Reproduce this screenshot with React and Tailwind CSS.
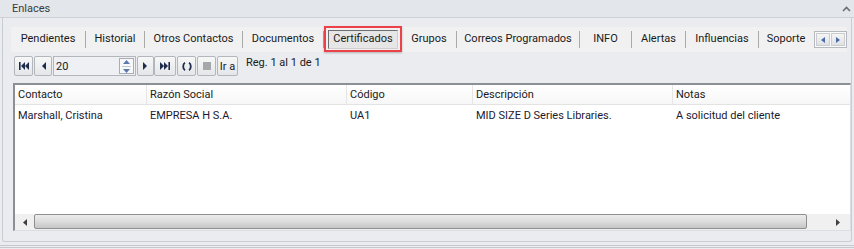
import React from "react";

const F = { fontFamily: 'Roboto, "Liberation Sans", Arial, sans-serif' };

function Sep() {
  return <div className="w-px h-[17px] bg-[#a9a9a9] shrink-0" />;
}

function Tab({ w, children }) {
  return (
    <div className={`h-full flex items-center justify-center shrink-0 text-[11px] text-[#1a1a1a] ${w}`}>
      {children}
    </div>
  );
}

function NavBtn({ w, children, ml = "" }) {
  return (
    <div
      className={`h-[20px] ${w} ${ml} shrink-0 rounded-[2px] border border-[#b3b6bb] bg-gradient-to-b from-[#f7f7f7] to-[#e4e6e9] flex items-center justify-center`}
    >
      {children}
    </div>
  );
}

const ic = "#1f2b4d";

export default function App() {
  return (
    <div style={F} className="w-[854px] h-[249px] bg-[#eaecef] overflow-hidden flex flex-col">
      {/* title bar */}
      <div className="h-[18px] shrink-0 bg-[#e3e6ea] border-b border-[#cdd1d6] flex items-center justify-between pl-[12px] pr-[3px]">
        <span className="text-[11px] text-[#3a3a3a] leading-none">Enlaces</span>
        <svg width="9" height="6" viewBox="0 0 9 6">
          <path d="M1 5 L4.5 1.5 L8 5" fill="none" stroke="#6b6f75" strokeWidth="1.6" />
        </svg>
      </div>

      {/* body */}
      <div className="h-[224px] shrink-0 flex flex-col ml-[2px] mr-[2px] border-l border-r border-b border-[#c9cdd2] rounded-b-[3px]">
        {/* tabs */}
        <div className="mt-[9px] ml-[8px] w-[836px] h-[25px] bg-[#f1f1f1] flex items-center">
          <Tab w="w-[74px]">Pendientes</Tab>
          <Sep />
          <Tab w="w-[58px]">Historial</Tab>
          <Sep />
          <Tab w="w-[97px]">Otros Contactos</Tab>
          <Sep />
          <Tab w="w-[80px]">Documentos</Tab>
          <Sep />
          <div className="w-[78px] h-[26px] -mt-px shrink-0 border-2 border-[#ec4148] flex items-center justify-center shadow-[0_1px_2px_rgba(0,0,0,0.25)]">
            <div className="w-[70px] h-[19px] border border-[#6f6f6f] border-b-[#cfcfcf] border-r-[#cfcfcf] bg-[#e6e6e6] flex items-center justify-center text-[11px] text-[#1a1a1a]">
              Certificados
            </div>
          </div>
          <Tab w="w-[54px]">Grupos</Tab>
          <Sep />
          <Tab w="w-[122px]">Correos Programados</Tab>
          <Sep />
          <Tab w="w-[51px]">INFO</Tab>
          <Sep />
          <Tab w="w-[53px]">Alertas</Tab>
          <Sep />
          <Tab w="w-[72px]">Influencias</Tab>
          <Sep />
          <Tab w="w-[54px]">Soporte</Tab>
          <div className="ml-[1px] w-[33px] h-[17px] border border-[#b5b8bd] bg-[#fafafa] flex p-px gap-px">
            <div className="flex-1 bg-gradient-to-b from-[#f5f5f5] to-[#dfe1e4] border border-[#c9ccd0] flex items-center justify-center">
              <svg width="4" height="6" viewBox="0 0 4 6"><path d="M4 0 L0 3 L4 6 Z" fill="#4a6aa8" /></svg>
            </div>
            <div className="flex-1 bg-gradient-to-b from-[#f5f5f5] to-[#dfe1e4] border border-[#c9ccd0] flex items-center justify-center">
              <svg width="4" height="6" viewBox="0 0 4 6"><path d="M0 0 L4 3 L0 6 Z" fill="#4a6aa8" /></svg>
            </div>
          </div>
        </div>

        {/* navigator */}
        <div className="mt-[4px] ml-[11px] flex items-start h-[20px]">
          <NavBtn w="w-[19px]">
            <svg width="10" height="8" viewBox="0 0 10 8">
              <rect x="0" y="0" width="1.6" height="8" fill={ic} />
              <path d="M6 0 L2 4 L6 8 Z" fill={ic} />
              <path d="M10 0 L6 4 L10 8 Z" fill={ic} />
            </svg>
          </NavBtn>
          <NavBtn w="w-[18px]" ml="ml-[1px]">
            <svg width="5" height="8" viewBox="0 0 5 8"><path d="M5 0 L1 4 L5 8 Z" fill={ic} /></svg>
          </NavBtn>
          <div className="ml-[1px] h-[20px] w-[83px] shrink-0 border border-[#b3b6bb] bg-[#eef0f3] flex items-center justify-between pl-[2px] pr-[1px]">
            <span className="text-[11px] text-[#1a1a1a] leading-none">20</span>
            <div className="w-[15px] h-[16px] border border-[#a9adb3] bg-[#f7f8fa] flex flex-col items-center justify-center gap-[2px]">
              <svg width="7" height="4" viewBox="0 0 7 4"><path d="M0 4 L3.5 0 L7 4 Z" fill="#5b79ad" /></svg>
              <div className="w-[9px] h-px bg-[#c3c6cb]" />
              <svg width="7" height="4" viewBox="0 0 7 4"><path d="M0 0 L3.5 4 L7 0 Z" fill="#5b79ad" /></svg>
            </div>
          </div>
          <NavBtn w="w-[17px]" ml="ml-[1px]">
            <svg width="5" height="8" viewBox="0 0 5 8"><path d="M0 0 L4 4 L0 8 Z" fill={ic} /></svg>
          </NavBtn>
          <NavBtn w="w-[22px]">
            <svg width="10" height="8" viewBox="0 0 10 8">
              <path d="M0 0 L4 4 L0 8 Z" fill={ic} />
              <path d="M4 0 L8 4 L4 8 Z" fill={ic} />
              <rect x="8.4" y="0" width="1.6" height="8" fill={ic} />
            </svg>
          </NavBtn>
          <NavBtn w="w-[19px]" ml="ml-[1px]">
            <svg width="10" height="9" viewBox="0 0 10 9">
              <path d="M3 0.8 C0.6 2 0.6 7 3 8.2" fill="none" stroke={ic} strokeWidth="1.8" />
              <path d="M7 0.8 C9.4 2 9.4 7 7 8.2" fill="none" stroke={ic} strokeWidth="1.8" />
            </svg>
          </NavBtn>
          <NavBtn w="w-[19px]" ml="ml-[1px]">
            <div className="w-[8px] h-[8px] bg-[#a5a7ab]" />
          </NavBtn>
          <NavBtn w="w-[21px]" ml="ml-[1px]">
            <span className="text-[11px] text-[#1a1a1a] leading-none">Ir a</span>
          </NavBtn>
          <span className="ml-[8px] text-[11px] text-[#1a1a1a] leading-[14px]">Reg. 1 al 1 de 1</span>
        </div>

        {/* grid */}
        <div className="mt-[7px] ml-[10px] w-[838px] h-[148px] border-t-2 border-l-2 border-t-[#8c8f94] border-l-[#8c8f94] border-r border-b border-r-[#dadde1] border-b-[#dadde1] bg-white flex flex-col">
          <div className="h-[20px] shrink-0 flex border-b border-[#e3e3e3] bg-gradient-to-b from-white to-[#f7f7f7] text-[11px] text-[#1a1a1a]">
            <div className="w-[132px] pl-[3px] pt-[2px] flex items-center border-r border-[#e5e5e5]">Contacto</div>
            <div className="w-[200px] pl-[3px] pt-[2px] flex items-center border-r border-[#e5e5e5]">Razón Social</div>
            <div className="w-[126px] pl-[3px] pt-[2px] flex items-center border-r border-[#e5e5e5]">Código</div>
            <div className="w-[200px] pl-[3px] pt-[2px] flex items-center border-r border-[#e5e5e5]">Descripción</div>
            <div className="flex-1 pl-[3px] pt-[2px] flex items-center">Notas</div>
          </div>
          <div className="h-[22px] shrink-0 flex text-[11px] text-[#1c1a2e]">
            <div className="w-[132px] pl-[3px] flex items-center">Marshall, Cristina</div>
            <div className="w-[200px] pl-[3px] flex items-center">EMPRESA H S.A.</div>
            <div className="w-[126px] pl-[3px] flex items-center">UA1</div>
            <div className="w-[200px] pl-[3px] flex items-center">MID SIZE D Series Libraries.</div>
            <div className="flex-1 pl-[3px] flex items-center">A solicitud del cliente</div>
          </div>
          <div className="flex-1" />
          {/* h scrollbar */}
          <div className="h-[16px] shrink-0 flex bg-[#f0f0f0]">
            <div className="w-[19px] flex items-center justify-center">
              <svg width="4" height="7" viewBox="0 0 4 7"><path d="M4 0 L0 3.5 L4 7 Z" fill="#404040" /></svg>
            </div>
            <div className="w-[773px] h-[15px] rounded-[2px] border border-[#8e8f91] bg-gradient-to-b from-[#ececec] via-[#dcdcdc] to-[#c6c6c6]" />
            <div className="flex-1 flex items-center justify-end pr-[10px]">
              <svg width="4" height="7" viewBox="0 0 4 7"><path d="M0 0 L4 3.5 L0 7 Z" fill="#404040" /></svg>
            </div>
          </div>
        </div>
      </div>
      <div className="mt-[3px] h-[3px] shrink-0 border-t border-b border-[#c5c9ce]" />
    </div>
  );
}
